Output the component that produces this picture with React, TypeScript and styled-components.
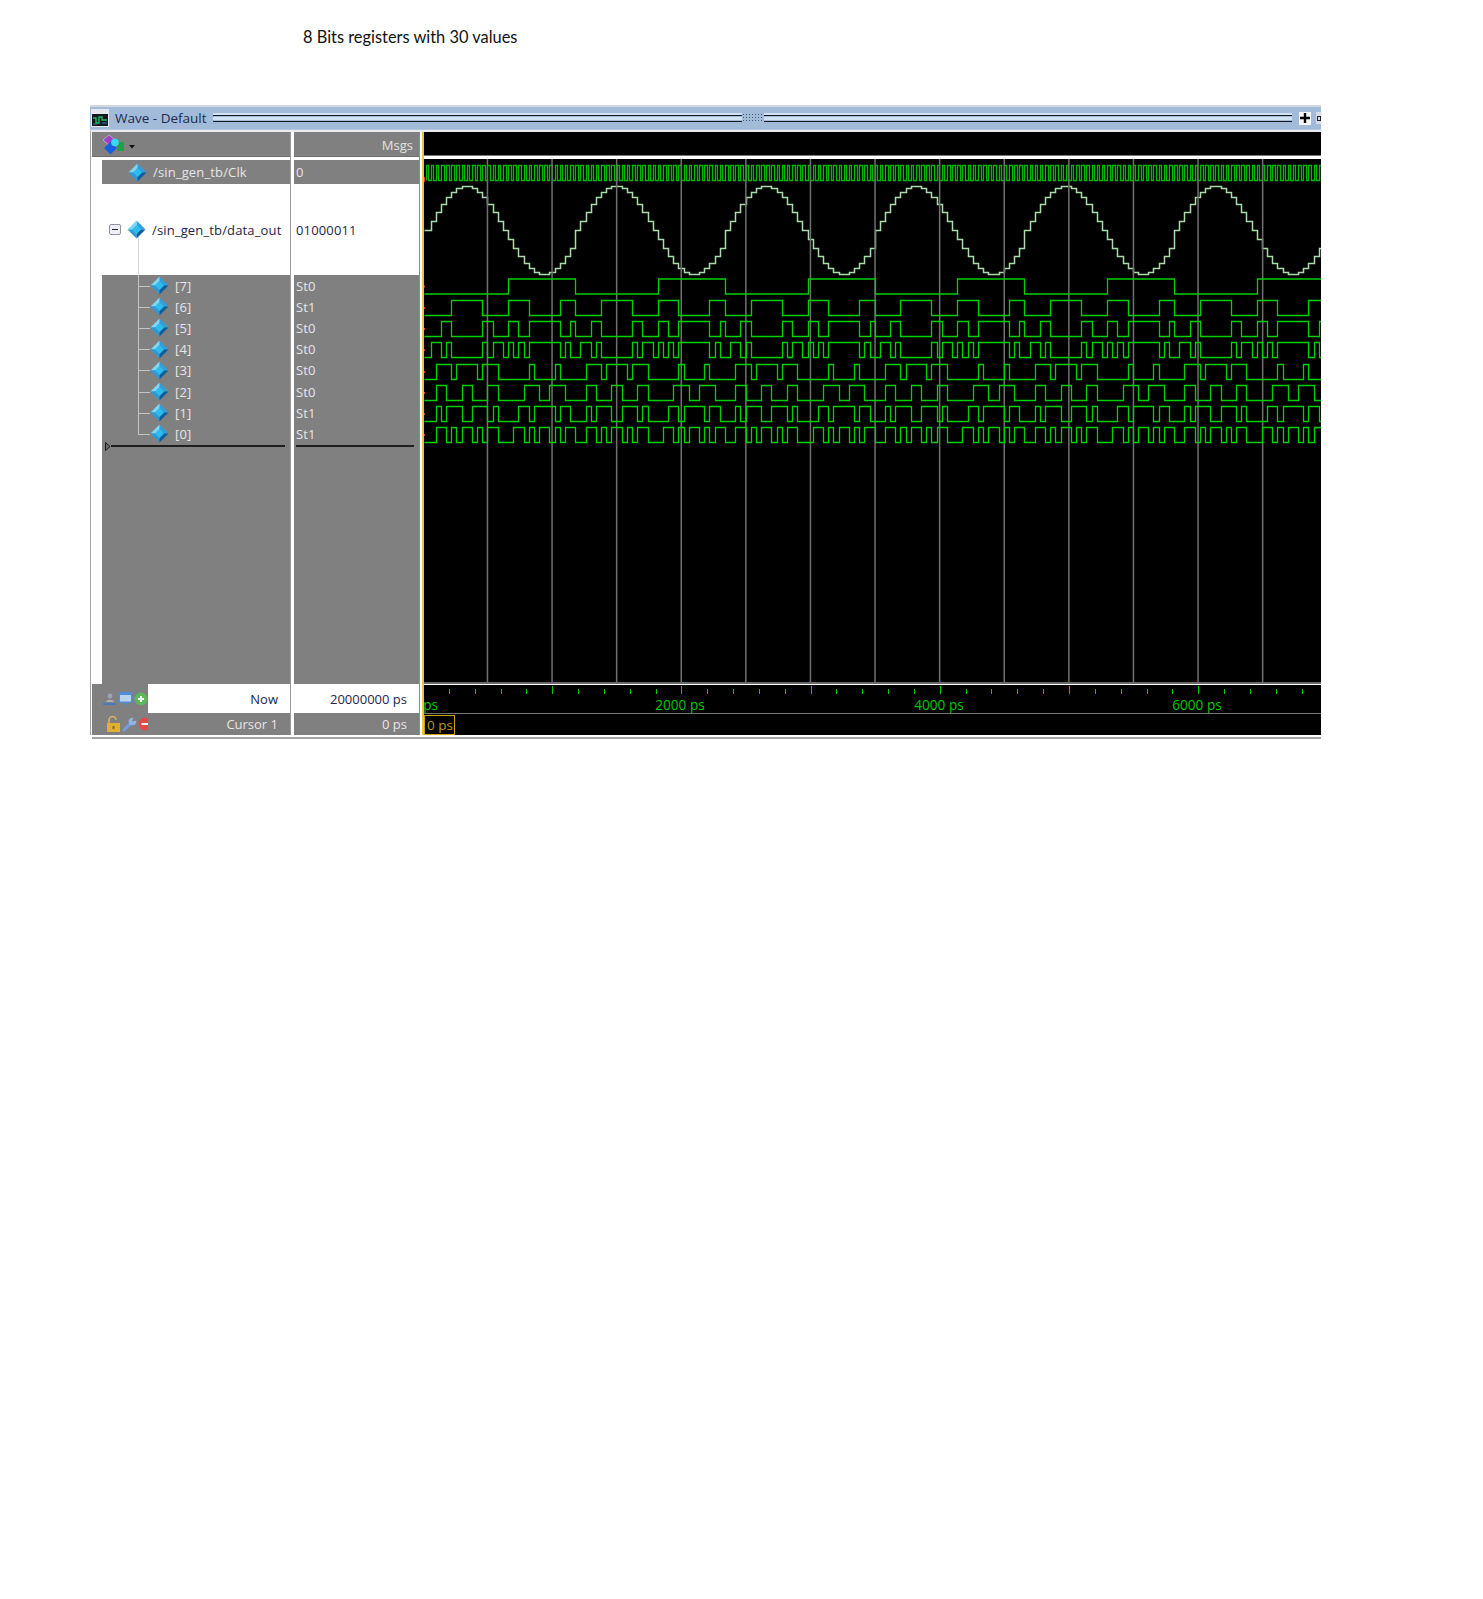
import React from 'react';
import styled, { createGlobalStyle } from 'styled-components';

const GlobalStyle = createGlobalStyle`
  html, body {
    margin: 0;
    background: #fff;
  }
`;

const UI_FONT = `'Open Sans', 'Liberation Sans', sans-serif`;
const STEP = 5.163;
const WAVE_W = 897;
const WAVE_TOP = 159;
const WAVE_H = 523;

// one period of the sine table, signed 8 bit
const SAMPLES = [
  0, 16, 31, 45, 58, 67, 74, 77, 77, 74, 67, 58, 45, 31, 16, 0, -16, -31, -45,
  -58, -67, -74, -77, -77, -74, -67, -58, -45, -31,
];

const BITS = [
  { label: '[7]', value: 'St0', bit: 7, top: 278.5 },
  { label: '[6]', value: 'St1', bit: 6, top: 300 },
  { label: '[5]', value: 'St0', bit: 5, top: 321 },
  { label: '[4]', value: 'St0', bit: 4, top: 342 },
  { label: '[3]', value: 'St0', bit: 3, top: 364 },
  { label: '[2]', value: 'St0', bit: 2, top: 385 },
  { label: '[1]', value: 'St1', bit: 1, top: 406 },
  { label: '[0]', value: 'St1', bit: 0, top: 427 },
];

const sampleX = (n: number) => Math.round(1.5 + n * STEP) + 0.5;

const buildPath = (yOf: (v: number, n: number) => number) => {
  let d = `M0.5 ${yOf(0, 0)}`;
  for (let n = 0; sampleX(n) < WAVE_W; n++) {
    const v = SAMPLES[n % SAMPLES.length];
    d += `V${yOf(v, n)}H${sampleX(n + 1)}`;
  }
  return d;
};

const bitPath = (bit: number, top: number) =>
  buildPath((v) => {
    const on = ((v + 256) >> bit) & 1;
    return (on ? top : top + 15) - WAVE_TOP + 0.5;
  });

const analogPath = buildPath((v) => Math.round(230 - v * 0.571) - WAVE_TOP + 0.5);

const clockPath = () => {
  const hi = 165.5 - WAVE_TOP;
  const lo = 180.5 - WAVE_TOP;
  let d = `M${sampleX(0)} ${lo}`;
  for (let n = 0; sampleX(n) < WAVE_W; n++) {
    const mid = Math.round(1.5 + (n + 0.5) * STEP) + 0.5;
    d += `V${hi}H${mid}V${lo}H${sampleX(n + 1)}`;
  }
  return d;
};

const Page = styled.div`
  width: 1483px;
  height: 1599px;
  background: #fff;
  overflow: hidden;
`;

const Caption = styled.div`
  height: 105px;
  box-sizing: border-box;
  padding: 27px 0 0 303px;
  font: 16.4px/20px Lato, 'Open Sans', sans-serif;
  color: #111;
`;

const Window = styled.div`
  margin-left: 90px;
  width: 1231px;
  font: 13px/16px ${UI_FONT};
`;

const TitleBar = styled.div`
  height: 25px;
  box-sizing: border-box;
  border-top: 2px solid #d4d9e0;
  background: #a2bbd8;
  display: flex;
  align-items: center;
  padding-left: 1px;
  color: #1d2b4f;
  border-bottom: 1px solid #b4c6dc;
`;

const TitleLabel = styled.div`
  width: 104px;
  padding-left: 6px;
  box-sizing: border-box;
  white-space: nowrap;
  font-size: 13.5px;
`;

const GripTrack = styled.div<{ $width?: number }>`
  height: 10px;
  width: ${(p) => (p.$width ? `${p.$width}px` : 'auto')};
  flex: ${(p) => (p.$width ? 'none' : '1')};
  background: linear-gradient(
    to bottom,
    #cfe3f2 0 2px,
    #15181c 2px 3px,
    #a2bbd8 3px 4px,
    #cfe3f2 4px 7px,
    #a2bbd8 7px 8px,
    #15181c 8px 9px,
    #a2bbd8 9px 10px
  );
`;

const GripKnob = styled.div`
  width: 22px;
  height: 10px;
  background-image: radial-gradient(#4c5a70 0.8px, transparent 1px);
  background-size: 3px 3px;
`;

const PlusButton = styled.div`
  margin-left: 7px;
  width: 12px;
  height: 13px;
  background: #f4f6f8;
  display: flex;
  align-items: center;
  justify-content: center;
`;

const EdgeButton = styled.div`
  margin-left: 5px;
  width: 5px;
  height: 12px;
  background: #d6dde6;
  display: flex;
  align-items: center;
  overflow: hidden;
  &::after {
    content: '';
    width: 4px;
    height: 5px;
    margin-left: 1px;
    border: 1px solid #222;
    box-sizing: border-box;
  }
`;

const Columns = styled.div<{ $height: number; $capped?: boolean }>`
  display: flex;
  height: ${(p) => p.$height}px;
  border-left: 1px solid #a6a6a6;
  border-top: ${(p) => (p.$capped ? '2px solid #e8ecf0' : '0')};
  padding-left: 1px;
`;

const NameColumn = styled.div`
  width: 199px;
  flex: none;
  display: flex;
  flex-direction: column;
  border-right: 1px solid #9a9a9a;
  box-sizing: border-box;
`;

const ValueColumn = styled.div`
  width: 125px;
  margin-left: 3px;
  flex: none;
  display: flex;
  flex-direction: column;
  border-right: 1px solid #8e8e8e;
  box-sizing: content-box;
`;

const WaveColumn = styled.div`
  margin-left: 2px;
  flex: 1;
  min-width: 0;
  border-left: 2px solid #eec23c;
  display: flex;
  flex-direction: column;
  background: #000;
  overflow: hidden;
`;

const HeadCell = styled.div<{ $align?: string }>`
  height: 24px;
  flex: none;
  background: #808080;
  color: #e2e2e2;
  display: flex;
  align-items: center;
  justify-content: ${(p) => p.$align || 'flex-start'};
  padding: 1px 6px 0 10px;
  box-sizing: border-box;
`;

const HeadRule = styled.div`
  height: 4px;
  flex: none;
  border-top: 1px solid #6f6f6f;
  background: #fff;
  box-sizing: border-box;
`;

const WaveHead = styled.div`
  height: 23px;
  flex: none;
  background: #000;
`;

const WaveRule = styled.div`
  height: 4px;
  flex: none;
  background: #fff;
  border-top: 1px solid #777;
  box-sizing: border-box;
`;

const PlotEdge = styled.div`
  height: 2px;
  flex: none;
  background: #6a6a6a;
`;

const RulerEdge = styled.div`
  height: 1px;
  flex: none;
  background: #fff;
`;

const TreeList = styled.div`
  flex: 1;
  display: flex;
  flex-direction: column;
  margin-left: 10px;
  background: #808080;
  min-height: 0;
`;

const Row = styled.div<{ $height: number; $light?: boolean; $indent?: number }>`
  height: ${(p) => p.$height}px;
  flex: none;
  display: flex;
  align-items: center;
  white-space: nowrap;
  letter-spacing: 0.15px;
  box-sizing: border-box;
  padding-left: ${(p) => p.$indent ?? 0}px;
  background: ${(p) => (p.$light ? '#fff' : '#808080')};
  color: ${(p) => (p.$light ? '#22264a' : '#e6e6e6')};
`;

const ExpandBox = styled.div`
  width: 12px;
  height: 11px;
  margin-right: 6px;
  box-sizing: border-box;
  border: 1px solid #8d93a4;
  border-radius: 2px;
  background: #eef0f5;
  display: flex;
  align-items: center;
  justify-content: center;
  &::after {
    content: '';
    width: 6px;
    height: 1px;
    background: #222;
  }
`;

const TreeStub = styled.div<{ $last?: boolean }>`
  width: 12px;
  align-self: stretch;
  flex: none;
  box-sizing: border-box;
  display: flex;
  flex-direction: column;
  border-left: ${(p) => (p.$last ? '0' : '1px solid #c4c4c4')};
  &::before {
    content: '';
    height: 50%;
    border-bottom: 1px solid #c4c4c4;
    border-left: ${(p) => (p.$last ? '1px solid #c4c4c4' : '0')};
  }
`;

const TreeDrop = styled.div`
  position: relative;
  width: 100%;
  height: 0;
  &::after {
    content: '';
    position: absolute;
    left: 36px;
    top: -38px;
    height: 38px;
    border-left: 1px solid #d8d8d8;
  }
`;

const SignalName = styled.span<{ $gap?: number }>`
  margin-left: ${(p) => p.$gap ?? 6}px;
`;

const InsertLine = styled.div<{ $inset: number; $right: number }>`
  display: flex;
  align-items: center;
  height: 9px;
  margin: -3px ${(p) => p.$right}px 0 ${(p) => p.$inset}px;
  &::after {
    content: '';
    flex: 1;
    height: 1.5px;
    background: #1e1e1e;
  }
`;

const ValueList = styled.div`
  flex: 1;
  background: #808080;
  display: flex;
  flex-direction: column;
  min-height: 0;
`;

const ValueText = styled.span`
  padding-left: 2px;
`;

const WaveSvg = styled.svg`
  display: block;
  flex: none;
`;

const FootName = styled.div<{ $light?: boolean }>`
  flex: 1;
  display: flex;
  align-items: center;
  justify-content: flex-end;
  padding-right: 12px;
  background: ${(p) => (p.$light ? '#fff' : '#808080')};
  color: ${(p) => (p.$light ? '#22264a' : '#e6e6e6')};
`;

const IconTray = styled.div<{ $pad: number }>`
  width: 56px;
  flex: none;
  align-self: stretch;
  background: #808080;
  display: flex;
  align-items: center;
  gap: 1px;
  padding-left: ${(p) => p.$pad}px;
  box-sizing: border-box;
  & > svg {
    flex: none;
  }
`;

const NameFoot = styled(NameColumn)`
  flex-direction: row;
`;

const CursorBar = styled.div`
  flex: 1;
  display: flex;
  align-items: flex-start;
  border-top: 1px solid #777;
  padding-top: 1px;
  background: #000;
`;

const CursorTag = styled.div`
  width: 31px;
  height: 20px;
  box-sizing: border-box;
  border: 1px solid #c9a400;
  color: #b89a10;
  line-height: 19px;
  padding-left: 2px;
  white-space: nowrap;
  font-size: 13.5px;
`;

const BottomEdge = styled.div`
  height: 4px;
  margin-left: 2px;
  box-sizing: border-box;
  border-bottom: 2px solid #a4a4a4;
`;

const Diamond = () => (
  <svg width="19" height="19" viewBox="0 0 19 19" style={{ flex: 'none' }}>
    <polygon points="9.5,0.5 18.5,9.5 13.5,9.5 9.5,5" fill="#2f9fdc" />
    <polygon points="9.5,0.5 0.5,9.5 5.5,9.5 9.5,5" fill="#7ed6f5" />
    <polygon points="0.5,9.5 9.5,18.5 9.5,14 5.5,9.5" fill="#2a9ad8" />
    <polygon points="18.5,9.5 9.5,18.5 9.5,14 13.5,9.5" fill="#0b5f9e" />
    <polygon points="9.5,5 14,9.5 9.5,14 5,9.5" fill="#2dbcef" />
  </svg>
);

const TitleIcon = () => (
  <svg width="18" height="18" viewBox="0 0 18 18" style={{ flex: 'none' }}>
    <rect width="18" height="18" fill="#e4e8ee" />
    <rect x="1" y="5" width="16" height="12" fill="#12181c" />
    <path d="M2 9h3v5h3V8h3v3h5" fill="none" stroke="#1fb86a" strokeWidth="1.4" />
    <path d="M2 15h4M11 14h5" stroke="#2f7fd0" strokeWidth="1" />
  </svg>
);

const PlusIcon = () => (
  <svg width="10" height="10" viewBox="0 0 10 10">
    <path d="M5 0v10M0 5h10" stroke="#000" strokeWidth="2.4" />
  </svg>
);

const ToolIcon = () => (
  <svg width="34" height="21" viewBox="0 0 34 21" style={{ flex: 'none' }}>
    <polygon points="7,1 13,6 7,11 1,6" fill="#a040c8" stroke="#d0b8e0" strokeWidth="0.7" />
    <rect x="15" y="8" width="7" height="9" fill="#1fa04a" />
    <polygon points="8.5,8 15,14 8.5,20.5 2,14" fill="#1460e0" />
    <circle cx="13" cy="8.5" r="3.8" fill="#38d8ee" />
    <polygon points="27,11 33,11 30,14.5" fill="#111" />
  </svg>
);

const PeopleIcon = () => (
  <svg width="14" height="14" viewBox="0 0 14 14">
    <circle cx="7" cy="4" r="2.4" fill="#9aa4b4" />
    <path d="M3 10c0-3 8-3 8 0z" fill="#a8b0bc" />
    <path d="M0 12h13" stroke="#3f78c4" strokeWidth="1.6" />
  </svg>
);

const ScreenIcon = () => (
  <svg width="15" height="15" viewBox="0 0 15 15">
    <rect x="0.5" y="1" width="14" height="11" rx="1" fill="#4f8fd6" />
    <rect x="2" y="4" width="11" height="6.5" fill="#b9d3ee" />
    <path d="M7 12l3 3v-3z" fill="#4f8fd6" />
  </svg>
);

const RoundIcon = ({ plus }: { plus?: boolean }) => (
  <svg width="14" height="14" viewBox="0 0 14 14">
    <circle cx="7" cy="7" r="6.5" fill={plus ? '#5cb85a' : '#e24a4a'} />
    <path d={plus ? 'M4 7h6M7 4v6' : 'M3.5 7h7'} stroke="#f2f2f2" strokeWidth="2" />
  </svg>
);

const LockIcon = () => (
  <svg width="15" height="16" viewBox="0 0 15 16">
    <path d="M3 7V4a3.5 3.5 0 0 1 7 0" fill="none" stroke="#d8b860" strokeWidth="1.5" />
    <rect x="1" y="7" width="13" height="9" fill="#e0b030" />
    <rect x="6.5" y="10" width="2" height="3" fill="#8a6a10" />
  </svg>
);

const WrenchIcon = () => (
  <svg width="15" height="15" viewBox="0 0 15 15">
    <path d="M2 13L9 6" stroke="#6f9fdc" strokeWidth="3" strokeLinecap="round" />
    <circle cx="10.5" cy="4.5" r="3.8" fill="#8fb4e4" />
    <polygon points="10,4.5 12,0 15,0 15,3.5" fill="#808080" />
  </svg>
);

const InsertMark = () => (
  <svg width="6" height="9" viewBox="0 0 6 9" style={{ flex: 'none' }}>
    <polygon points="0.5,0.5 5,4.5 0.5,8.5" fill="#6a6a6a" stroke="#1e1e1e" />
  </svg>
);

const gridLines = Array.from({ length: 13 }, (_, k) => 486.7 + 64.6 * k - 424);
const ticks = Array.from({ length: 36 }, (_, k) => k);
const rulerLabels = [
  { text: '2000 ps', x: 256 },
  { text: '4000 ps', x: 515 },
  { text: '6000 ps', x: 773 },
];

const WavePlot = () => (
  <WaveSvg width={WAVE_W} height={WAVE_H} viewBox={`0 0 ${WAVE_W} ${WAVE_H}`}>
    <path d={clockPath()} fill="none" stroke="#00b800" strokeWidth="1.3" />
    <path d={analogPath} fill="none" stroke="#a8dca8" strokeWidth="1.5" />
    {gridLines.map((x) => (
      <rect key={x} x={x} y={0} width={1.5} height={WAVE_H} fill="#707070" />
    ))}
    {BITS.map((b) => (
      <path
        key={b.bit}
        d={bitPath(b.bit, b.top)}
        fill="none"
        stroke="#00d000"
        strokeWidth="1.3"
      />
    ))}
    {BITS.map((b) => (
      <rect key={b.bit} x={0} y={b.top + 7 - WAVE_TOP} width={1} height={2} fill="#e04020" />
    ))}
    <rect x={0} y={18} width={1} height={5} fill="#e04020" />
  </WaveSvg>
);

const Ruler = () => (
  <WaveSvg width={WAVE_W} height={28} viewBox={`0 0 ${WAVE_W} 28`}>
    {ticks.map((k) => (
      <rect
        key={k}
        x={Math.round(-1 + 25.84 * k)}
        y={k % 5 === 0 ? 1 : 4}
        width={1}
        height={k % 5 === 0 ? 8 : 5}
        fill="#00c800"
      />
    ))}
    <text x={-12} y={25} fill="#00c800" fontFamily={UI_FONT} fontSize="13.6">
      0 ps
    </text>
    {rulerLabels.map((l) => (
      <text key={l.text} x={l.x} y={25} fill="#00c800" fontFamily={UI_FONT} fontSize="13.6" textAnchor="middle">
        {l.text}
      </text>
    ))}
  </WaveSvg>
);

const App = () => (
  <Page>
    <GlobalStyle />
    <Caption>8 Bits registers with 30 values</Caption>
    <Window>
      <TitleBar>
        <TitleIcon />
        <TitleLabel>Wave - Default</TitleLabel>
        <GripTrack $width={529} />
        <GripKnob />
        <GripTrack />
        <PlusButton>
          <PlusIcon />
        </PlusButton>
        <EdgeButton />
      </TitleBar>
      <Columns $height={552} $capped>
        <NameColumn>
          <HeadCell>
            <ToolIcon />
          </HeadCell>
          <HeadRule />
          <TreeList>
            <Row $height={24} $indent={26}>
              <Diamond />
              <SignalName>/sin_gen_tb/Clk</SignalName>
            </Row>
            <Row $height={91} $light $indent={7}>
              <ExpandBox />
              <Diamond />
              <SignalName>/sin_gen_tb/data_out</SignalName>
            </Row>
            <TreeDrop />
            {BITS.map((b, i) => (
              <Row key={b.bit} $height={21.2} $indent={36}>
                <TreeStub $last={i === BITS.length - 1} />
                <Diamond />
                <SignalName>{b.label}</SignalName>
              </Row>
            ))}
            <InsertLine $inset={3} $right={5}>
              <InsertMark />
            </InsertLine>
          </TreeList>
        </NameColumn>
        <ValueColumn>
          <HeadCell $align="flex-end">Msgs</HeadCell>
          <HeadRule />
          <ValueList>
            <Row $height={24}>
              <ValueText>0</ValueText>
            </Row>
            <Row $height={91} $light>
              <ValueText>01000011</ValueText>
            </Row>
            {BITS.map((b) => (
              <Row key={b.bit} $height={21.2}>
                <ValueText>{b.value}</ValueText>
              </Row>
            ))}
            <InsertLine $inset={2} $right={5} />
          </ValueList>
        </ValueColumn>
        <WaveColumn>
          <WaveHead />
          <WaveRule />
          <WavePlot />
          <PlotEdge />
        </WaveColumn>
      </Columns>
      <Columns $height={29}>
        <NameFoot>
          <IconTray $pad={11}>
            <PeopleIcon />
            <ScreenIcon />
            <RoundIcon plus />
          </IconTray>
          <FootName $light>Now</FootName>
        </NameFoot>
        <ValueColumn>
          <FootName $light>20000000 ps</FootName>
        </ValueColumn>
        <WaveColumn>
          <RulerEdge />
          <Ruler />
        </WaveColumn>
      </Columns>
      <Columns $height={22}>
        <NameFoot>
          <IconTray $pad={14}>
            <LockIcon />
            <WrenchIcon />
            <RoundIcon />
          </IconTray>
          <FootName>Cursor 1</FootName>
        </NameFoot>
        <ValueColumn>
          <FootName>0 ps</FootName>
        </ValueColumn>
        <WaveColumn>
          <CursorBar>
            <CursorTag>0 ps</CursorTag>
          </CursorBar>
        </WaveColumn>
      </Columns>
      <BottomEdge />
    </Window>
  </Page>
);

export default App;
